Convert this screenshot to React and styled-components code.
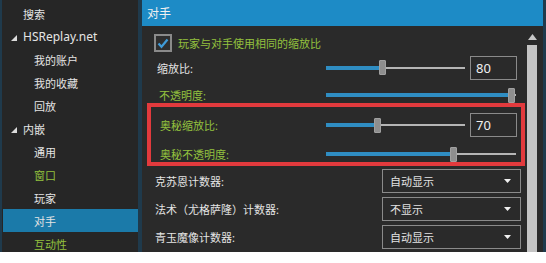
import styled, { createGlobalStyle } from "styled-components";

const GlobalStyle = createGlobalStyle`
  body {
    margin: 0;
    background: #ffffff;
    font-family: "Noto Sans", "Noto Sans CJK SC", sans-serif;
  }
`;

const WHITE = "#e4e4e4";
const GREEN = "#93c13e";

const Frame = styled.div`
  width: 546px;
  height: 252px;
  display: flex;
  background: #1f3a4c;
  overflow: hidden;
`;

const Sidebar = styled.div`
  width: 136px;
  margin-left: 2px;
  margin-right: 4px;
  padding-top: 2px;
  background: #262626;
  display: flex;
  flex-direction: column;
`;

const NavItem = styled.div`
  height: 23px;
  flex-shrink: 0;
  display: flex;
  align-items: center;
  padding-left: ${(p) => p.$indent}px;
  margin-left: 1px;
  font-size: ${(p) => (p.$latin ? 12 : 11)}px;
  color: ${(p) => (p.$green ? GREEN : WHITE)};
  background: ${(p) => (p.$active ? "#1b7aa9" : "transparent")};
`;

const Expander = styled.svg`
  width: 6px;
  height: 6px;
  margin-right: 6px;
  margin-left: -12px;
  margin-top: 2px;
`;

const Main = styled.div`
  width: 401px;
  display: flex;
  flex-direction: column;
  background: #2a2a2a;
`;

const Header = styled.div`
  height: 26px;
  flex-shrink: 0;
  background: #1d8bc6;
  color: #f0f0f0;
  font-size: 12px;
  display: flex;
  align-items: center;
  padding-left: 5px;
`;

const Body = styled.div`
  flex: 1;
  display: flex;
  padding-right: 4px;
`;

const Content = styled.div`
  width: 385px;
  padding-top: 8px;
  display: flex;
  flex-direction: column;
`;

const CheckRow = styled.div`
  height: 18px;
  display: flex;
  align-items: center;
  padding-left: 12px;
  gap: 6px;
  font-size: 11px;
  color: ${GREEN};
`;

const CheckBox = styled.div`
  width: 14px;
  height: 14px;
  border: 2px solid #8a8a8a;
  background: #2e2e2e;
  display: flex;
  align-items: center;
  justify-content: center;
`;

const Row = styled.div`
  height: ${(p) => p.$h}px;
  margin-top: ${(p) => p.$mt || 0}px;
  flex-shrink: 0;
  display: flex;
  align-items: center;
  padding-left: ${(p) => p.$pl}px;
  padding-right: ${(p) => p.$pr}px;
`;

const Label = styled.div`
  flex: 1;
  font-size: 11px;
  color: ${(p) => (p.$green ? GREEN : WHITE)};
  white-space: nowrap;
`;

const Highlight = styled.div`
  margin: 0 0 0 5px;
  border: 4px solid #e23a3d;
  padding-top: 6px;
  display: flex;
  flex-direction: column;
`;

const SliderBox = styled.div`
  width: ${(p) => p.$w}px;
  height: 16px;
  display: flex;
  align-items: center;
`;

const Fill = styled.div`
  height: 4px;
  background: #2f8dc2;
`;

const Thumb = styled.div`
  width: 7px;
  height: 15px;
  background: #8e8e8e;
  border: 1px solid #a0a0a0;
  box-sizing: border-box;
  border-radius: 1px;
`;

const Rest = styled.div`
  flex: 1;
  height: 2px;
  background: #b5b5b5;
`;

const NumberBox = styled.div`
  width: 47px;
  height: 24px;
  box-sizing: border-box;
  margin-left: 5px;
  border: 1px solid #8a8a8a;
  color: #f0f0f0;
  font-size: 13px;
  display: flex;
  align-items: center;
  padding-left: 5px;
`;

const Select = styled.div`
  width: 139px;
  height: 24px;
  box-sizing: border-box;
  border: 1px solid #8a8a8a;
  display: flex;
  align-items: center;
  justify-content: space-between;
  padding: 0 9px 0 7px;
  font-size: 11px;
  color: ${WHITE};
`;

const Caret = styled.svg`
  width: 7px;
  height: 4px;
`;

const ScrollBar = styled.div`
  width: 10px;
  margin: 0 2px;
  padding-top: 8px;
  display: flex;
  flex-direction: column;
  align-items: center;
`;

const ScrollArrow = styled.svg`
  width: 9px;
  height: 6px;
  margin-bottom: 5px;
`;

const ScrollThumb = styled.div`
  flex: 1;
  width: 10px;
  background: #c4c4c4;
`;

const Slider = ({ width, pct }) => {
  const left = Math.round(pct * (width - 7));
  return (
    <SliderBox $w={width}>
      <Fill style={{ width: left }} />
      <Thumb />
      <Rest />
    </SliderBox>
  );
};

const Triangle = () => (
  <Expander viewBox="0 0 6 6">
    <path d="M6 0 L6 6 L0 6 Z" fill="#dcdcdc" />
  </Expander>
);

const Dropdown = ({ children }) => (
  <Select>
    <span>{children}</span>
    <Caret viewBox="0 0 7 4">
      <path d="M0 0 L7 0 L3.5 4 Z" fill="#f0f0f0" />
    </Caret>
  </Select>
);

const nav = [
  { label: "搜索", indent: 20 },
  { label: "HSReplay.net", indent: 20, tree: true, latin: true },
  { label: "我的账户", indent: 31 },
  { label: "我的收藏", indent: 31 },
  { label: "回放", indent: 31 },
  { label: "内嵌", indent: 20, tree: true },
  { label: "通用", indent: 31 },
  { label: "窗口", indent: 31, green: true },
  { label: "玩家", indent: 31 },
  { label: "对手", indent: 31, active: true },
  { label: "互动性", indent: 31, green: true },
];

export default function App() {
  return (
    <>
      <GlobalStyle />
      <Frame>
        <Sidebar>
          {nav.map((n) => (
            <NavItem
              key={n.label}
              $indent={n.indent}
              $green={n.green}
              $active={n.active}
              $latin={n.latin}
            >
              {n.tree && <Triangle />}
              {n.label}
            </NavItem>
          ))}
        </Sidebar>
        <Main>
          <Header>对手</Header>
          <Body>
            <Content>
              <CheckRow>
                <CheckBox>
                  <svg width="12" height="11" viewBox="0 0 12 11">
                    <path
                      d="M1.5 5.5 L4.5 8.8 L10.5 1.5"
                      fill="none"
                      stroke="#3f9bd8"
                      strokeWidth="2.2"
                    />
                  </svg>
                </CheckBox>
                玩家与对手使用相同的缩放比
              </CheckRow>
              <Row $h={25} $mt={3} $pl={15} $pr={8}>
                <Label>缩放比:</Label>
                <Slider width={139} pct={0.405} />
                <NumberBox>80</NumberBox>
              </Row>
              <Row $h={16} $mt={7} $pl={17} $pr={9}>
                <Label $green>不透明度:</Label>
                <Slider width={190} pct={0.995} />
              </Row>
              <Highlight>
                <Row $h={24} $pl={9} $pr={4}>
                  <Label $green>奥秘缩放比:</Label>
                  <Slider width={139} pct={0.36} />
                  <NumberBox>70</NumberBox>
                </Row>
                <Row $h={16} $mt={9} $pl={9} $pr={5}>
                  <Label $green>奥秘不透明度:</Label>
                  <Slider width={190} pct={0.68} />
                </Row>
              </Highlight>
              <Row $h={24} $mt={3} $pl={13} $pr={4}>
                <Label>克苏恩计数器:</Label>
                <Dropdown>自动显示</Dropdown>
              </Row>
              <Row $h={24} $mt={4} $pl={13} $pr={4}>
                <Label>法术（尤格萨隆）计数器:</Label>
                <Dropdown>不显示</Dropdown>
              </Row>
              <Row $h={24} $mt={4} $pl={13} $pr={4}>
                <Label>青玉魔像计数器:</Label>
                <Dropdown>自动显示</Dropdown>
              </Row>
            </Content>
            <ScrollBar>
              <ScrollArrow viewBox="0 0 9 6">
                <path d="M0 6 L4.5 0 L9 6 Z" fill="#c8c8c8" />
              </ScrollArrow>
              <ScrollThumb />
            </ScrollBar>
          </Body>
        </Main>
      </Frame>
    </>
  );
}
